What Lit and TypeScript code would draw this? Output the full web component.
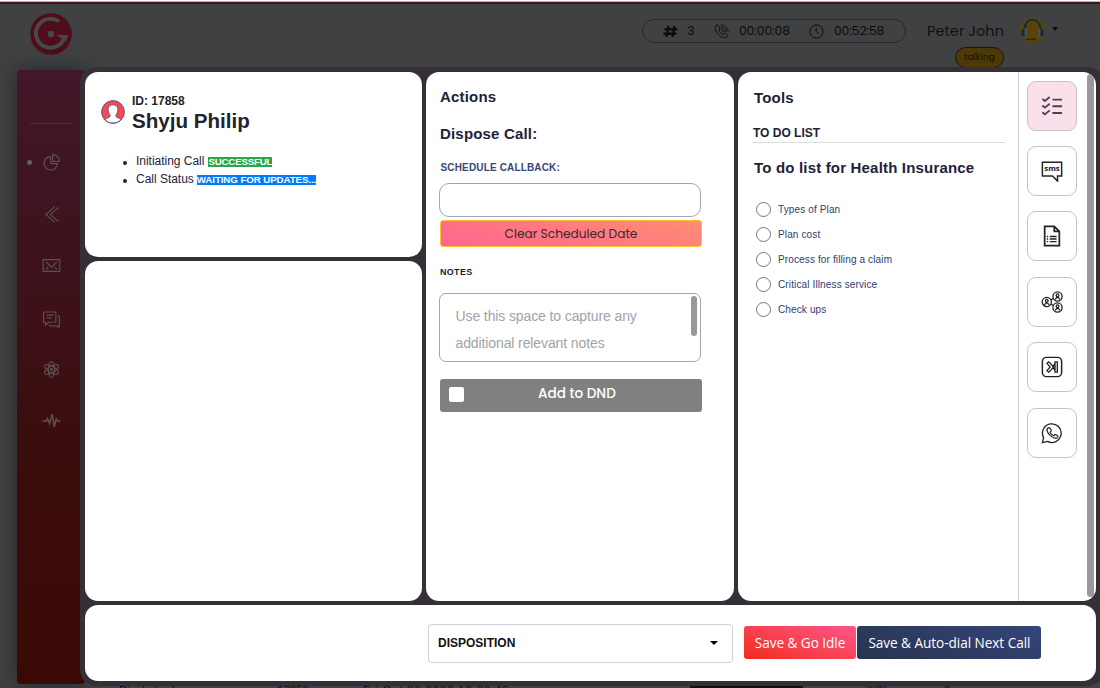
import { LitElement, html, css, svg } from "lit";
import { customElement } from "lit/decorators.js";

const navIcons = [
  svg`<path d="M11 4.5A8.500 8.500 0 1 0 19.500 13.500H11z"/><path d="M13.500 2v8.500H22A8.500 8.500 0 0 0 13.500 2z"/>`,
  svg`<path d="M16 2 5 12l11 10M21 3l-10.500 9L21 21"/>`,
  svg`<path d="M1.500 4.500h21v15h-21zM5 7.500l7 6.500 7-6.500M5 17l3-3M19 17l-3-3"/>`,
  svg`<path d="M2 2.500h15.500v13H8l-3.500 3.500v-3.500H2zM6 6.500h9M6 10h6M19.500 8H22v12h-1.500v2L17.500 20H10l-1.500-1.500"/>`,
  svg`<ellipse cx="12" cy="12" rx="4" ry="10"/><ellipse cx="12" cy="12" rx="4" ry="10" transform="rotate(60 12 12)"/><ellipse cx="12" cy="12" rx="4" ry="10" transform="rotate(120 12 12)"/><circle cx="12" cy="12" r="1.500"/>`,
  svg`<path d="M.500 13h4.500l2-3.500 2.500 6.500L13 4l2.500 16L18 10l2 3h3.500" stroke-width="1.900"/>`,
];

const toolIcons = [
  svg`<g stroke-width="2" stroke="#4a434a"><path d="M1.500 4.200 4.200 6.500 9.500 2.200M1.500 11.500l2.700 2.300L9.500 9.500M1.500 18.800l2.700 2.300 5.300-4.300M12.500 5h10.500M12.500 12.300h10.500M12.500 19.600h10.500"/></g>`,
  svg`<path d="M1.500 2.500h21v15h-4.500v5.500L12.500 17.500h-11z" stroke-width="1.600"/><text x="12" y="12.300" text-anchor="middle" class="sms">sms</text>`,
  svg`<path d="M4 1.500h10.500l5.500 5.500v15.500H4zM14.500 1.500v5.500H20" stroke-width="1.900"/><path d="M9.500 12.500h7.500M9.500 15.300h7.500M9.500 18.100h7.500M6.300 12.500h1.500M6.300 15.300h1.500M6.300 18.100h1.500" stroke-width="1.500"/>`,
  svg`<g stroke-width="1.400"><circle cx="6.300" cy="12" r="5"/><circle cx="18" cy="6" r="5"/><circle cx="18" cy="18" r="5"/><circle cx="6.300" cy="10.700" r="1.500"/><circle cx="18" cy="4.700" r="1.500"/><circle cx="18" cy="16.700" r="1.500"/><path d="M3.700 15.300q2.600-5 5.200 0M15.400 9.300q2.600-5 5.200 0M15.400 21.300q2.600-5 5.200 0M10.800 9.800l2.600-1.600M10.800 14.200l2.600 1.600"/></g>`,
  svg`<rect x="1.500" y="1.500" width="21" height="21" rx="4.500" stroke-width="1.600"/><path d="M6.500 8 8.500 6.300l5.500 5.700-5.500 5.700L6.500 16l3.500-4zM15.300 6.300h2.500v11.400h-2.500zM15.300 8l-2.500 4 2.500 4" stroke-width="1.400"/>`,
  svg`<path d="M1.500 22.500 2.800 17A10.200 10.200 0 1 1 7 21.200z" stroke-width="1.400"/><path d="M8 6.300c-3.500 2 0 6.500 2.200 8.500s6.500 4.500 8.300 1.500c.6-1-2.500-3-3.200-2.600L14 15c-1.300-.3-3.700-2.500-4.100-4l1.300-1.400C11.600 8.800 9.300 5.500 8 6.300z" stroke-width="1.300"/>`,
];

@customElement("app-root")
export class AppRoot extends LitElement {
  static styles = css`
    :host { display: block; position: relative; width: 1100px; height: 688px; overflow: hidden;
      background: #404142; font-family: "Liberation Sans", Arial, sans-serif; color: #1c2340; }
    * { box-sizing: border-box; }
    svg { display: block; fill: none; stroke: currentColor; flex: none; }
    svg.flat { stroke: none; }
    ul { list-style: none; margin: 0; padding: 0; }
    .pop { font-family: Poppins, Inter, sans-serif; }
    .page { height: 688px; display: flex; flex-direction: column; }
    .strip { height: 4px; flex: none; background: #4a0f18; border-top: 1px solid #fff; box-shadow: inset 0 1px #b9b9b9; }
    .header { height: 66px; flex: none; display: flex; align-items: flex-start; padding: 8px 0 0 29px; color: #0c0d0e; }
    .pill { margin: 7px 0 0 569px; width: 264px; height: 24px; border: 1px solid #262728; border-radius: 12px;
      display: flex; align-items: center; padding-left: 20px; font-size: 12.300px; color: #0c0d0e; }
    .hash { margin-right: 6px; } .n3 { width: 30px; }
    .t1 { width: 70px; margin-left: 10px; letter-spacing: -.100px; } .t2 { margin-left: 10px; letter-spacing: -.100px; }
    .user { width: 77px; margin-left: 21px; display: flex; flex-direction: column; align-items: flex-end; }
    .uname { font-size: 14.500px; line-height: 22px; margin-top: 8px; white-space: nowrap; letter-spacing: .050px; color: #101112; }
    .talk { margin: 5px 0 0 0; width: 49px; height: 21px; border: 1px solid #1a1608; border-radius: 11px; background: #4b3a08;
      font-size: 9.200px; line-height: 18px; text-align: center; color: #1d0d04; }
    .ava { margin: 5px 0 0 15px; }
    .caret { margin: 15px 0 0 6px; border: 3.500px solid transparent; border-top: 4px solid #0c0d0e; border-bottom: 0; }
    .side { width: 68px; height: 614px; margin-left: 17px; flex: none; border-radius: 4px; padding: 53px 0 0 9px;
      background: linear-gradient(#421729, #3d1117 40%, #3a0c0c 65%, #3b0905); box-shadow: 0 0 20px #222527; color: #5e4e50; }
    .line { width: 43px; height: 1px; margin-left: 4px; background: #54303a; }
    .nav { display: flex; align-items: center; height: 18px; }
    .nav1 { margin-top: 29px; } .nav2 { margin-top: 34px; } .nav3 { margin-top: 33px; }
    .nav4 { margin-top: 36px; } .nav5 { margin-top: 32px; } .nav6 { margin-top: 33px; }
    .dot { width: 5px; height: 5px; border-radius: 50%; margin: 0 11px 0 1px; }
    .nav svg { margin-left: -1px; }
    .nav1 .dot { background: #675d5e; }
    .row { display: flex; font-size: 11.500px; line-height: 14px; padding-left: 119px; margin-top: -1px; color: #101112; white-space: nowrap; }
    .r1 { width: 158px; } .r2 { width: 86px; } .r3 { width: 327px; letter-spacing: .800px; } .r4 { width: 113px; background: #101011; margin-top: 2px; }
    .r5 { margin-left: 54px; width: 87px; }

    .modal { position: absolute; left: 80px; top: 67px; width: 1024px; height: 619px; background: #352f38; border-radius: 16px;
      padding: 5px 8px 5px 5px; display: grid; grid-template-columns: 337px 308px 358px; grid-template-rows: 185px 340px 76px; gap: 4px; }
    .card { background: #fff; border-radius: 13px; overflow: hidden; }
    .lead { padding: 21px 16px; }
    .actions { grid-column: 2; grid-row: 1 / 3; padding: 15px 32px 0 14px; }
    .tools { grid-column: 3; grid-row: 1 / 3; display: flex; }
    .foot { grid-column: 1 / 4; display: flex; align-items: flex-start; padding: 19px 0 0 343px; }

    .who { display: flex; color: #212529; }
    .face { margin: 7px 7px 0 0; }
    .id { font-size: 12px; font-weight: 700; line-height: 16px; }
    .name { font-size: 20.600px; font-weight: 700; line-height: 24px; }
    .status { margin: 19px 0 0 20px; }
    .status li { display: flex; align-items: center; font-size: 12px; line-height: 18px; white-space: pre; letter-spacing: -.020px; }
    .status li::before { content: ""; width: 4px; height: 4px; border-radius: 50%; background: #1c2340; margin: 4px 9px 0 2px; }
    .tag { font-size: 9.700px; font-weight: 700; line-height: 10.500px; color: #fff; margin: 2px 0 0 4px; letter-spacing: -.170px; }
    .blue { background: #007bff; margin-left: 3px; letter-spacing: -.070px; } .green { background: #28a745; }

    .h { font-size: 15px; font-weight: 700; line-height: 20px; letter-spacing: .180px; color: #1c2238; white-space: nowrap; }
    .gap17 { margin-top: 17px; }
    .sched { margin: 17px 0 0 .500px; font-size: 10px; font-weight: 700; line-height: 14px; letter-spacing: .150px; color: #384777; }
    .input { width: 262px; height: 34px; margin: 8px 0 3px -1px; border: 1px solid #a4a5b3; border-radius: 10px; }
    .clear { width: 262px; height: 27px; border: 1px solid #ffc030; border-radius: 3px; background: linear-gradient(14deg, #ff6590, #ff8d72);
      text-align: center; font-size: 12.200px; line-height: 26px; color: #3c2730; }
    .notes { margin-top: 19px; font-size: 9px; font-weight: 700; line-height: 12px; letter-spacing: .300px; color: #1c2238; }
    .area { width: 262px; height: 69px; margin: 15px 0 17px -1px; border: 1px solid #a4a5b3; border-radius: 7px; display: flex;
      justify-content: space-between; padding: 9px 3px 0 15.500px; font-size: 14px; line-height: 27px; letter-spacing: -.110px; color: #a0a3aa; }
    .thumb { width: 6px; height: 40px; border-radius: 3px; background: #999; margin-top: -7px; }
    .dnd { width: 262px; height: 33px; border-radius: 3px; background: #808080; display: flex; align-items: center; color: #fff;
      font-size: 13.600px; font-weight: 500; padding: 0 0 2px 9px; margin-top: -.500px; }
    .box { width: 15px; height: 15px; border-radius: 2px; background: #fff; margin-right: 74px; }

    .list { width: 281px; flex: none; padding: 16px 13px 0 14px; border-right: 1px solid #ccc; }
    .list .h { margin-left: 2px; }
    .todo { font-size: 12px; font-weight: 700; line-height: 18px; height: 19px; margin: 16px 0 15px; padding-left: 1px; border-bottom: 1px solid #ddd; color: #1c2238; }
    .items { margin-top: 19px; }
    .items li { height: 25px; display: flex; align-items: center; font-size: 10px; letter-spacing: .130px; color: #2d3d70; padding-left: 4px; }
    .ring { width: 15px; height: 15px; border: 1px solid #777; border-radius: 50%; margin-right: 7px; }
    .rail { width: 67px; padding: 8.600px 0 0 8px; display: flex; flex-direction: column; gap: 15.400px; }
    .tool { width: 50px; height: 50px; flex: none; border: 1px solid #c4c4c4; border-radius: 9px; display: flex; align-items: center; justify-content: center; color: #222; }
    .tool.on { background: #fbdfeb; }
    .sms { font: 700 8.500px "Open Sans", sans-serif; fill: #111; stroke: none; }
    .scroll { width: 7px; height: 523px; margin: 2px 0 0 1px; border-radius: 4px; background: #999; }

    .select { width: 305px; height: 39px; border: 1px solid #ced0da; border-radius: 4px; display: flex; justify-content: space-between; align-items: center;
      padding: 0 14px 1px 9px; font-size: 12px; font-weight: 700; color: #111; }
    .arrow { border: 4px solid transparent; border-top-color: #000; border-bottom: 0; }
    .btn { height: 33px; margin-top: 2px; border-radius: 3px; font-family: "Segoe UI", "Open Sans", sans-serif; font-size: 13.600px; line-height: 34px;
      text-align: center; color: #fff; white-space: nowrap; }
    .idle { width: 112px; margin-left: 11px; background: linear-gradient(20deg, #f22b1a, #f8414f 45%, #fb568b); letter-spacing: -.050px; }
    .next { width: 184px; margin-left: 1.400px; background: linear-gradient(20deg, #28344e, #35447a); letter-spacing: -.050px; }
  `;

  render() {
    return html`
      <div class="page">
        <div class="strip"></div>
        <div class="header">
          <svg class="flat" width="44" height="44" viewBox="0 0 44 44">
            <circle cx="22" cy="22" r="20.800" fill="#4e0d18"/>
            <path d="M30 9.500A14.500 14.500 0 1 0 35.500 25" stroke="#47484a" stroke-width="4" fill="none"/>
            <path d="M27 22.800l12 .300c-.300 3-1 4.700-2 6.200z" fill="#47484a"/>
            <circle cx="22" cy="22" r="3.200" fill="#47484a"/>
          </svg>
          <div class="pill pop">
            <svg class="hash" width="15" height="15" viewBox="0 0 15 15" stroke-width="2.400"><path d="M5.500 2 3.500 13M11.500 2l-2 11M1.500 5.300h13M.500 9.800h13"/></svg>
            <span class="n3">&nbsp;3</span>
            <svg width="15" height="15" viewBox="0 0 24 24" stroke-width="1.600"><path d="M5 1.500C-1 5 3 13 7 17s11 7.500 15 2.500c1-1.500-4-5-5.500-4.500L14 17c-2-.500-6-5-6.500-7L9.500 8C10 6.500 6.500.500 5 1.500zM11 1.500c6 0 11.500 5 11.500 11M11 5c4.500 0 8 3.500 8 8M11 9c3 0 4.500 1.500 4.500 4"/></svg>
            <span class="t1">00:00:08</span>
            <svg width="15" height="15" viewBox="0 0 15 15"><circle cx="7.500" cy="7.500" r="6.600"/><path d="M7.200 3.500v4.200l2.300 2"/></svg>
            <span class="t2">00:52:58</span>
          </div>
          <div class="user">
            <div class="uname pop">Peter John</div>
            <div class="talk pop">talking</div>
          </div>
          <svg class="flat ava" width="27" height="27" viewBox="0 0 27 27">
            <circle cx="13.500" cy="13.500" r="12.700" fill="#5a4307"/>
            <path d="M5.500 12C6.500-.500 20.500-.500 21.500 12" stroke="#0d2c42" stroke-width="1.900" fill="none"/>
            <rect x="2.500" y="12" width="4" height="7.500" rx="2" fill="#0d2c42"/><rect x="5.500" y="11.500" width="2.800" height="8.500" fill="#4d4d4b"/>
            <rect x="20.500" y="12" width="4" height="7.500" rx="2" fill="#0d2c42"/><rect x="18.700" y="11.500" width="2.800" height="8.500" fill="#4d4d4b"/>
            <path d="M7 22.300h8.500" stroke="#0d2c42" stroke-width="1.300"/><circle cx="15" cy="22.300" r="1.500" fill="#0d2c42"/>
          </svg>
          <div class="caret"></div>
        </div>
        <div class="side">
          <div class="line"></div>
          ${navIcons.map((icon, i) => html`<div class="nav nav${i + 1}"><span class="dot"></span><svg width="19" height="19" viewBox="0 0 24 24" stroke-width="1.500">${icon}</svg></div>`)}
        </div>
        <div class="row">
          <span class="r1">Rinckukesh</span><span class="r2">17853</span><span class="r3">Fri Oct 06 2023 12:30:43</span><span class="r4"></span><span class="r5">will(2)</span><span>2</span>
        </div>
      </div>

      <div class="modal">
        <section class="card lead">
          <div class="who">
            <svg class="flat face" width="24" height="24" viewBox="0 0 24 24">
              <circle cx="12" cy="12" r="11.400" fill="#fa4654" stroke="#596176" stroke-width="1"/>
              <path d="M4 19.500c1.500-1.500 5-1.700 5.300-3.500.1-1-.8-1.300-1.200-2.500-.8-2-1-3.500-.8-5C7.700 6 9.500 4.800 12 4.800s4.300 1.200 4.700 3.700c.2 1.500 0 3-.8 5-.4 1.200-1.300 1.500-1.200 2.500.3 1.800 3.800 2 5.300 3.500C16 24.200 8 24.200 4 19.500z" fill="#fff" stroke="#596176" stroke-width=".9"/>
            </svg>
            <div><div class="id">ID: 17858</div><div class="name">Shyju Philip</div></div>
          </div>
          <ul class="status">
            <li>Initiating Call<span class="tag green">SUCCESSFUL</span></li>
            <li>Call Status<span class="tag blue">WAITING FOR UPDATES...</span></li>
          </ul>
        </section>
        <section class="card actions">
          <div class="h">Actions</div>
          <div class="h gap17">Dispose Call:</div>
          <div class="sched">SCHEDULE CALLBACK:</div>
          <div class="input"></div>
          <div class="clear pop">Clear Scheduled Date</div>
          <div class="notes">NOTES</div>
          <div class="area"><div>Use this space to capture any<br />additional relevant notes</div><div class="thumb"></div></div>
          <div class="dnd pop"><span class="box"></span>Add to DND</div>
        </section>
        <section class="card tools">
          <div class="list">
            <div class="h">Tools</div>
            <div class="todo">TO DO LIST</div>
            <div class="h">To do list for Health Insurance</div>
            <ul class="items">
              ${["Types of Plan", "Plan cost", "Process for filling a claim", "Critical Illness service", "Check ups"].map((t) => html`<li><span class="ring"></span>${t}</li>`)}
            </ul>
          </div>
          <div class="rail">
            ${toolIcons.map((icon, i) => html`<div class="tool ${i === 0 ? "on" : ""}"><svg width="22" height="22" viewBox="0 0 24 24">${icon}</svg></div>`)}
          </div>
          <div class="scroll"></div>
        </section>
        <section class="card"></section>
        <section class="card foot">
          <div class="select">DISPOSITION<span class="arrow"></span></div>
          <div class="btn idle">Save &amp; Go Idle</div>
          <div class="btn next">Save &amp; Auto-dial Next Call</div>
        </section>
      </div>
    `;
  }
}
